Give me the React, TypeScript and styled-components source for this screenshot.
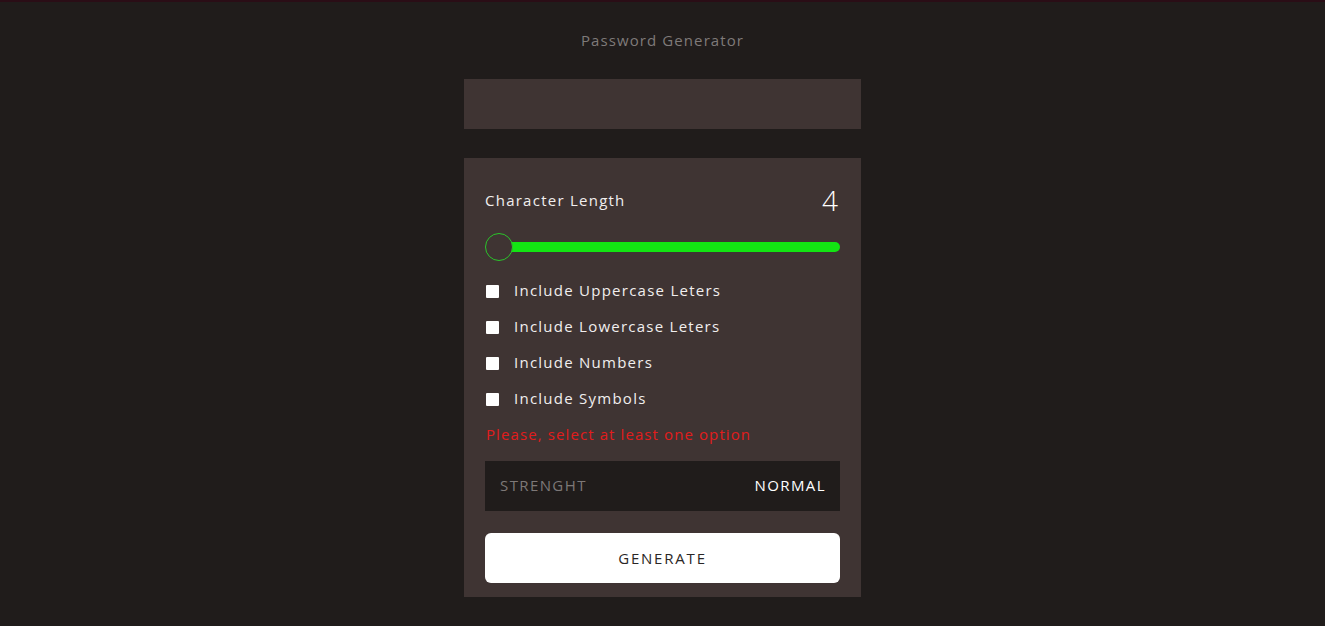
import * as React from "react";
import styled, { createGlobalStyle } from "styled-components";

const GlobalStyle = createGlobalStyle`
  html, body {
    margin: 0;
    padding: 0;
    background: #201c1b;
  }
  body {
    font-family: "Open Sans", "DejaVu Sans", sans-serif;
    border-top: 2px solid #2a0d16;
    min-height: 624px;
  }
`;

const Page = styled.main`
  display: flex;
  flex-direction: column;
  align-items: center;
  padding-top: 28px;
`;

const Title = styled.h1`
  margin: 0;
  font-size: 15px;
  font-weight: 400;
  letter-spacing: 1.1px;
  color: #7f7a79;
  line-height: 20px;
`;

const Output = styled.div`
  width: 397px;
  height: 50px;
  margin-top: 29px;
  background: #3f3433;
`;

const Card = styled.section`
  width: 397px;
  box-sizing: border-box;
  margin-top: 29px;
  padding: 24px 21px 14px;
  background: #3f3433;
  display: flex;
  flex-direction: column;
`;

const LengthRow = styled.div`
  display: flex;
  justify-content: space-between;
  align-items: center;
  height: 36px;
`;

const Label = styled.span`
  color: #f1eeee;
  font-size: 15px;
  font-weight: 500;
  letter-spacing: 1.25px;
`;

const LengthValue = styled.span`
  color: #ffffff;
  font-size: 28px;
  font-weight: 300;
  margin-right: 2px;
`;

const SliderWrap = styled.div`
  position: relative;
  height: 28px;
  margin-top: 15px;
  display: flex;
  align-items: center;
`;

const Track = styled.div`
  flex: 1;
  height: 10px;
  margin-left: 14px;
  border-radius: 5px;
  background: #13e513;
`;

const Thumb = styled.div`
  position: absolute;
  left: 0;
  top: 0;
  width: 28px;
  height: 28px;
  box-sizing: border-box;
  border-radius: 50%;
  border: 1px solid #2bc42b;
  background: #3f3433;
`;

const Options = styled.div`
  display: flex;
  flex-direction: column;
  gap: 14px;
  margin-top: 19px;
`;

const OptionRow = styled.label`
  display: flex;
  align-items: center;
  height: 22px;
`;

const Box = styled.span`
  width: 13px;
  height: 13px;
  margin-left: 1px;
  margin-right: 15px;
  margin-top: 1px;
  background: #ffffff;
  border-radius: 1px;
`;

const OptionText = styled(Label)`
  margin-top: -2px;
`;

const ErrorText = styled.p`
  margin: 13px 0 1px 1px;
  color: #e21c1c;
  font-size: 15px;
  font-weight: 500;
  letter-spacing: 1.1px;
  line-height: 22px;
`;

const StrengthBox = styled.div`
  margin-top: 15px;
  height: 50px;
  box-sizing: border-box;
  padding: 0 15px 3px;
  background: #201c1b;
  display: flex;
  align-items: center;
  justify-content: space-between;
`;

const StrengthLabel = styled.span<{ $bright?: boolean }>`
  font-size: 15px;
  font-weight: ${(p) => (p.$bright ? 500 : 400)};
  letter-spacing: 1.4px;
  color: ${(p) => (p.$bright ? "#ffffff" : "#7d7877")};
  margin-right: ${(p) => (p.$bright ? "-1px" : "0")};
`;

const GenerateButton = styled.button`
  margin-top: 22px;
  height: 50px;
  padding-bottom: 2px;
  border: none;
  border-radius: 6px;
  background: #ffffff;
  color: #2a2626;
  font-family: inherit;
  font-size: 15px;
  letter-spacing: 1.8px;
  cursor: pointer;
`;

const options = [
  "Include Uppercase Leters",
  "Include Lowercase Leters",
  "Include Numbers",
  "Include Symbols",
];

export default function App() {
  return (
    <>
      <GlobalStyle />
      <Page>
        <Title>Password Generator</Title>
        <Output />
        <Card>
          <LengthRow>
            <Label>Character Length</Label>
            <LengthValue>4</LengthValue>
          </LengthRow>
          <SliderWrap>
            <Track />
            <Thumb />
          </SliderWrap>
          <Options>
            {options.map((o) => (
              <OptionRow key={o}>
                <Box />
                <OptionText>{o}</OptionText>
              </OptionRow>
            ))}
          </Options>
          <ErrorText>Please, select at least one option</ErrorText>
          <StrengthBox>
            <StrengthLabel>STRENGHT</StrengthLabel>
            <StrengthLabel $bright>NORMAL</StrengthLabel>
          </StrengthBox>
          <GenerateButton>GENERATE</GenerateButton>
        </Card>
      </Page>
    </>
  );
}
